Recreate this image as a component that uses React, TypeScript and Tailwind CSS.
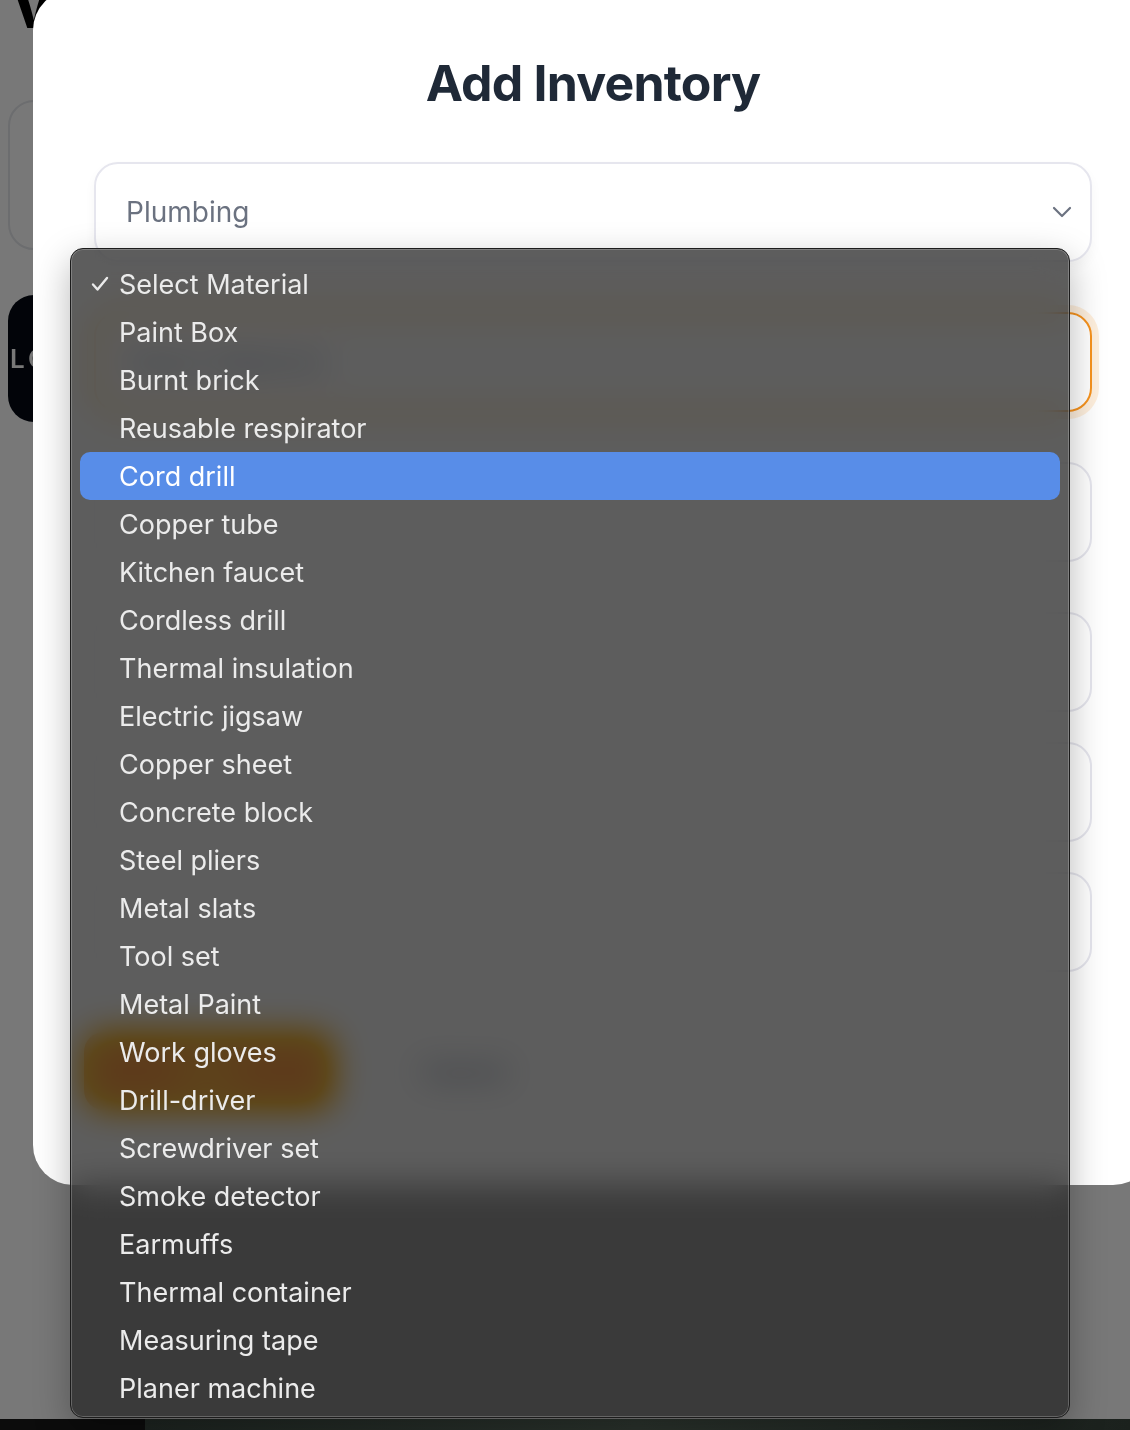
import React from "react";

const materials = [
  "Select Material",
  "Paint Box",
  "Burnt brick",
  "Reusable respirator",
  "Cord drill",
  "Copper tube",
  "Kitchen faucet",
  "Cordless drill",
  "Thermal insulation",
  "Electric jigsaw",
  "Copper sheet",
  "Concrete block",
  "Steel pliers",
  "Metal slats",
  "Tool set",
  "Metal Paint",
  "Work gloves",
  "Drill-driver",
  "Screwdriver set",
  "Smoke detector",
  "Earmuffs",
  "Thermal container",
  "Measuring tape",
  "Planer machine",
];

function Field({ className = "", children }: { className?: string; children?: React.ReactNode }) {
  return (
    <div className={`flex h-[100px] items-center rounded-[24px] border-2 border-[#e6e6ee] bg-white px-[30px] ${className}`}>
      {children}
    </div>
  );
}

export default function App() {
  return (
    <div className="relative h-[1430px] w-[1130px] overflow-hidden bg-white font-['Inter',sans-serif]">
      {/* page behind the overlay */}
      <div className="absolute left-[12px] top-[-34px] text-[56px] font-extrabold text-black">V</div>
      <div className="absolute left-[8px] top-[100px] h-[150px] w-[200px] rounded-[26px] border-2 border-gray-200 bg-white" />
      <div className="absolute left-[8px] top-[295px] flex h-[127px] w-[200px] items-center rounded-[26px] bg-[#050a14] pl-[2px] text-[26px] font-semibold tracking-[4px] text-white">
        LOGIN
      </div>
      <div className="absolute inset-0 bg-black/[0.53]" />

      {/* dock / desktop strip */}
      <div className="absolute bottom-0 left-0 flex h-[11px] w-full">
        <div className="w-[145px] bg-[#0c0c0c]" />
        <div className="flex-1 bg-gradient-to-r from-[#1d2420] via-[#2a322c] to-[#1b211d]" />
      </div>

      {/* modal */}
      <div className="absolute left-[33px] top-[-10px] flex h-[1195px] w-[1120px] flex-col rounded-[40px] bg-white px-[61px] pt-[63px]">
        <h1 className="text-center text-[50px] font-bold leading-[60px] tracking-[-0.8px] text-[#1f2937]">Add Inventory</h1>

        <Field className="mt-[49px] justify-between shadow-[0_6px_12px_rgba(0,0,0,0.04)]">
          <span className="text-[28px] text-[#6b7280]">Plumbing</span>
          <svg width="20" height="12" viewBox="0 0 20 12" fill="none" className="-mr-[12px]">
            <path d="M2 2l8 8 8-8" stroke="#6b7280" strokeWidth="2.2" strokeLinecap="round" strokeLinejoin="round" />
          </svg>
        </Field>

        <Field className="mt-[50px] border-[#f7931e] ring-[7px] ring-[#f7931e]/15">
          <span className="text-[28px] text-[#6b7280]">Select Material</span>
        </Field>
        <Field className="mt-[50px]" />
        <Field className="mt-[50px]" />
        <Field className="mt-[30px]" />
        <Field className="mt-[30px]" />

        <div className="mt-[60px] flex items-center gap-[30px]">
          <button className="-ml-[10px] h-[78px] w-[250px] rounded-[20px] bg-[#f28a0c] text-[26px] font-semibold text-white">Save</button>
          <button className="h-[64px] w-[200px] rounded-[20px] text-[26px] font-medium text-[#374151]">Cancel</button>
        </div>
      </div>

      {/* native select menu */}
      <div className="absolute left-[70px] top-[248px] h-[1170px] w-[1000px] overflow-hidden rounded-[13px] border border-[#1c1c1c] bg-[rgba(37,37,37,0.74)] pb-[6px] pt-[11px] shadow-[inset_0_0_0_1px_rgba(255,255,255,0.22),0_12px_36px_rgba(0,0,0,0.28)] backdrop-blur-[17px] backdrop-saturate-[2]">
        {materials.map((m, i) => (
          <div
            key={m}
            className={`mx-[9px] flex h-[48px] items-center rounded-[10px] pl-[39px] text-[27px] leading-none ${
              i === 4 ? "bg-[#588de8] text-white" : "text-[#ebebeb]"
            }`}
          >
            {i === 0 && (
              <svg width="18" height="16" viewBox="0 0 18 16" fill="none" className="-ml-[28px] mr-[10px]">
                <path d="M2 8.5l4.5 5L16 2" stroke="#ebebeb" strokeWidth="2.4" strokeLinecap="round" strokeLinejoin="round" />
              </svg>
            )}
            {m}
          </div>
        ))}
      </div>
    </div>
  );
}
